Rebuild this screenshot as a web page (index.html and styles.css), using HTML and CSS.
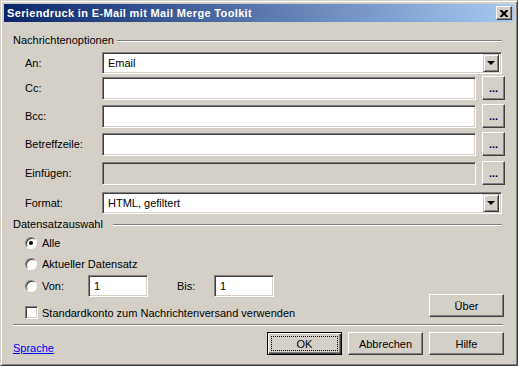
FILE: index.html
```html
<!DOCTYPE html>
<html lang="de">
<head>
    <meta charset="UTF-8">
    <title>Seriendruck in E-Mail mit Mail Merge Toolkit</title>
    <link rel="stylesheet" href="styles.css">
</head>
<body>
    <div class="window">
        <div class="titlebar">
            <span class="title">Seriendruck in E-Mail mit Mail Merge Toolkit</span>
            <span class="close">
                <svg width="8" height="7" viewBox="0 0 8 7"><path d="M0 0h2l2 2 2-2h2v1l-2.5 2.5L8 6v1H6L4 5 2 7H0V6l2.5-2.5L0 1z" fill="#000"/></svg>
            </span>
        </div>
        <div class="content">
            <div class="group-title"><span>Nachrichtenoptionen</span></div>
            <div class="fields">
                <label class="lbl">An:</label>
                <div class="combo wide"><span class="combo-text">Email</span><span class="drop"><i></i></span></div>

                <label class="lbl">Cc:</label>
                <div class="edit"></div>
                <span class="btn dots">...</span>

                <label class="lbl">Bcc:</label>
                <div class="edit"></div>
                <span class="btn dots">...</span>

                <label class="lbl">Betreffzeile:</label>
                <div class="edit"></div>
                <span class="btn dots">...</span>

                <label class="lbl">Einfügen:</label>
                <div class="edit disabled"></div>
                <span class="btn dots">...</span>

                <label class="lbl">Format:</label>
                <div class="combo wide"><span class="combo-text">HTML, gefiltert</span><span class="drop"><i></i></span></div>
            </div>

            <div class="group-title second"><span>Datensatzauswahl</span></div>
            <div class="records">
                <div class="options">
                    <div class="opt"><span class="radio checked"></span>Alle</div>
                    <div class="opt"><span class="radio"></span>Aktueller Datensatz</div>
                    <div class="opt range">
                        <span class="radio"></span><span class="von">Von:</span>
                        <div class="edit small">1</div>
                        <span class="bis">Bis:</span>
                        <div class="edit small">1</div>
                    </div>
                    <div class="opt check"><span class="checkbox"></span>Standardkonto zum Nachrichtenversand verwenden</div>
                </div>
                <span class="btn push about">Über</span>
            </div>

            <div class="separator"></div>

            <div class="footer">
                <a class="link" href="#">Sprache</a>
                <div class="buttons">
                    <span class="btn push default"><span class="focus">OK</span></span>
                    <span class="btn push">Abbrechen</span>
                    <span class="btn push">Hilfe</span>
                </div>
            </div>
        </div>
    </div>
</body>
</html>
```

FILE: styles.css
```css
body {
    margin: 0;
    background-color: #d4d0c8;
    font-family: "Liberation Sans", Arial, sans-serif;
    font-size: 11px;
    color: #000;
}

.window {
    box-sizing: border-box;
    width: 518px;
    height: 366px;
    padding: 3px;
    background-color: #d4d0c8;
    border: 1px solid;
    border-color: #d4d0c8 #404040 #404040 #d4d0c8;
    box-shadow: inset 1px 1px #fff, inset -1px -1px #808080;
}

.titlebar {
    height: 18px;
    display: flex;
    align-items: center;
    justify-content: space-between;
    padding: 0 2px 0 3px;
    background: linear-gradient(to right, #0a246a, #a6caf0);
    color: #fff;
    font-weight: bold;
}

.title {
    letter-spacing: 0.35px;
}

.close {
    box-sizing: border-box;
    width: 16px;
    height: 14px;
    display: flex;
    align-items: center;
    justify-content: center;
    background-color: #d4d0c8;
    border: 1px solid;
    border-color: #fff #404040 #404040 #fff;
    box-shadow: inset -1px -1px #808080;
}

.content {
    padding: 12px 10px 0 9px;
}

.group-title {
    display: flex;
    align-items: center;
    height: 13px;
    line-height: 13px;
    padding-right: 2px;
}

.group-title::after {
    content: "";
    flex: 1;
    height: 1px;
    margin-left: 3px;
    border-top: 1px solid #808080;
    background-color: #fff;
}

.group-title.second {
    margin-top: 4px;
}

.group-title.second::after {
    margin-left: 10px;
}

.fields {
    display: grid;
    grid-template-columns: 71px 374px 23px;
    column-gap: 6px;
    grid-template-rows: 25px 28px 28px 29px 30px 22px;
    margin: 5px 0 0 12px;
    align-items: start;
}

.lbl {
    display: flex;
    align-items: center;
    height: 22px;
}

.edit,
.combo {
    box-sizing: border-box;
    height: 23px;
    background-color: #fff;
    border: 1px solid;
    border-color: #808080 #fff #fff #808080;
    box-shadow: inset 1px 1px #404040, inset -1px -1px #d4d0c8;
}

.edit.disabled {
    background-color: #d4d0c8;
}

.combo {
    height: 22px;
    display: flex;
    align-items: center;
    justify-content: space-between;
    padding: 2px;
}

.combo.wide {
    grid-column: 2 / 4;
    margin-right: 3px;
}

.combo-text {
    padding-left: 3px;
}

.drop {
    box-sizing: border-box;
    width: 16px;
    height: 18px;
    display: flex;
    align-items: center;
    justify-content: center;
    background-color: #d4d0c8;
    border: 1px solid;
    border-color: #d4d0c8 #404040 #404040 #d4d0c8;
    box-shadow: inset 1px 1px #fff, inset -1px -1px #808080;
}

.drop i {
    width: 0;
    height: 0;
    border-left: 4px solid transparent;
    border-right: 4px solid transparent;
    border-top: 4px solid #000;
}

.btn {
    box-sizing: border-box;
    display: flex;
    align-items: center;
    justify-content: center;
    background-color: #d4d0c8;
    border: 1px solid;
    border-color: #fff #404040 #404040 #fff;
    box-shadow: inset -1px -1px #808080;
}

.dots {
    height: 24px;
    margin-top: -1px;
    font-weight: bold;
    color: #000060;
}

.records {
    display: flex;
    justify-content: space-between;
    align-items: flex-end;
}

.options {
    padding-left: 12px;
    margin-top: 1px;
}

.opt {
    display: flex;
    align-items: center;
    height: 21px;
}

.radio {
    box-sizing: border-box;
    width: 12px;
    height: 12px;
    margin-right: 5px;
    border-radius: 50%;
    background-color: #fff;
    border: 1px solid;
    border-color: #808080 #fff #fff #808080;
    box-shadow: inset 1px 1px #404040;
    display: flex;
    align-items: center;
    justify-content: center;
}

.radio.checked::after {
    content: "";
    width: 4px;
    height: 4px;
    border-radius: 50%;
    background-color: #000;
}

.opt.range {
    height: 24px;
}

.von {
    width: 46px;
}

.edit.small {
    width: 60px;
    height: 22px;
    padding: 4px 0 0 5px;
    line-height: 13px;
}

.bis {
    width: 37px;
    margin-left: 29px;
}

.opt.check {
    margin-top: 4px;
}

.checkbox {
    box-sizing: border-box;
    width: 13px;
    height: 13px;
    margin-right: 4px;
    background-color: #fff;
    border: 1px solid;
    border-color: #808080 #fff #fff #808080;
    box-shadow: inset 1px 1px #404040, inset -1px -1px #d4d0c8;
}

.push {
    width: 75px;
    height: 23px;
}

.about {
    margin-bottom: 6px;
}

.separator {
    height: 1px;
    margin: 1px 1px 0 0;
    border-top: 1px solid #808080;
    background-color: #fff;
}

.footer {
    display: flex;
    justify-content: space-between;
    align-items: flex-end;
    margin-top: 6px;
}

.link {
    color: #0000ff;
    line-height: 13px;
}

.buttons {
    display: flex;
    gap: 6px;
}

.push.default {
    border: 1px solid #000;
    box-shadow: inset 1px 1px #fff, inset -1px -1px #404040, inset -2px -2px #808080;
    padding: 3px;
}

.focus {
    flex: 1;
    align-self: stretch;
    display: flex;
    align-items: center;
    justify-content: center;
    border: 1px dotted #000;
}
```
